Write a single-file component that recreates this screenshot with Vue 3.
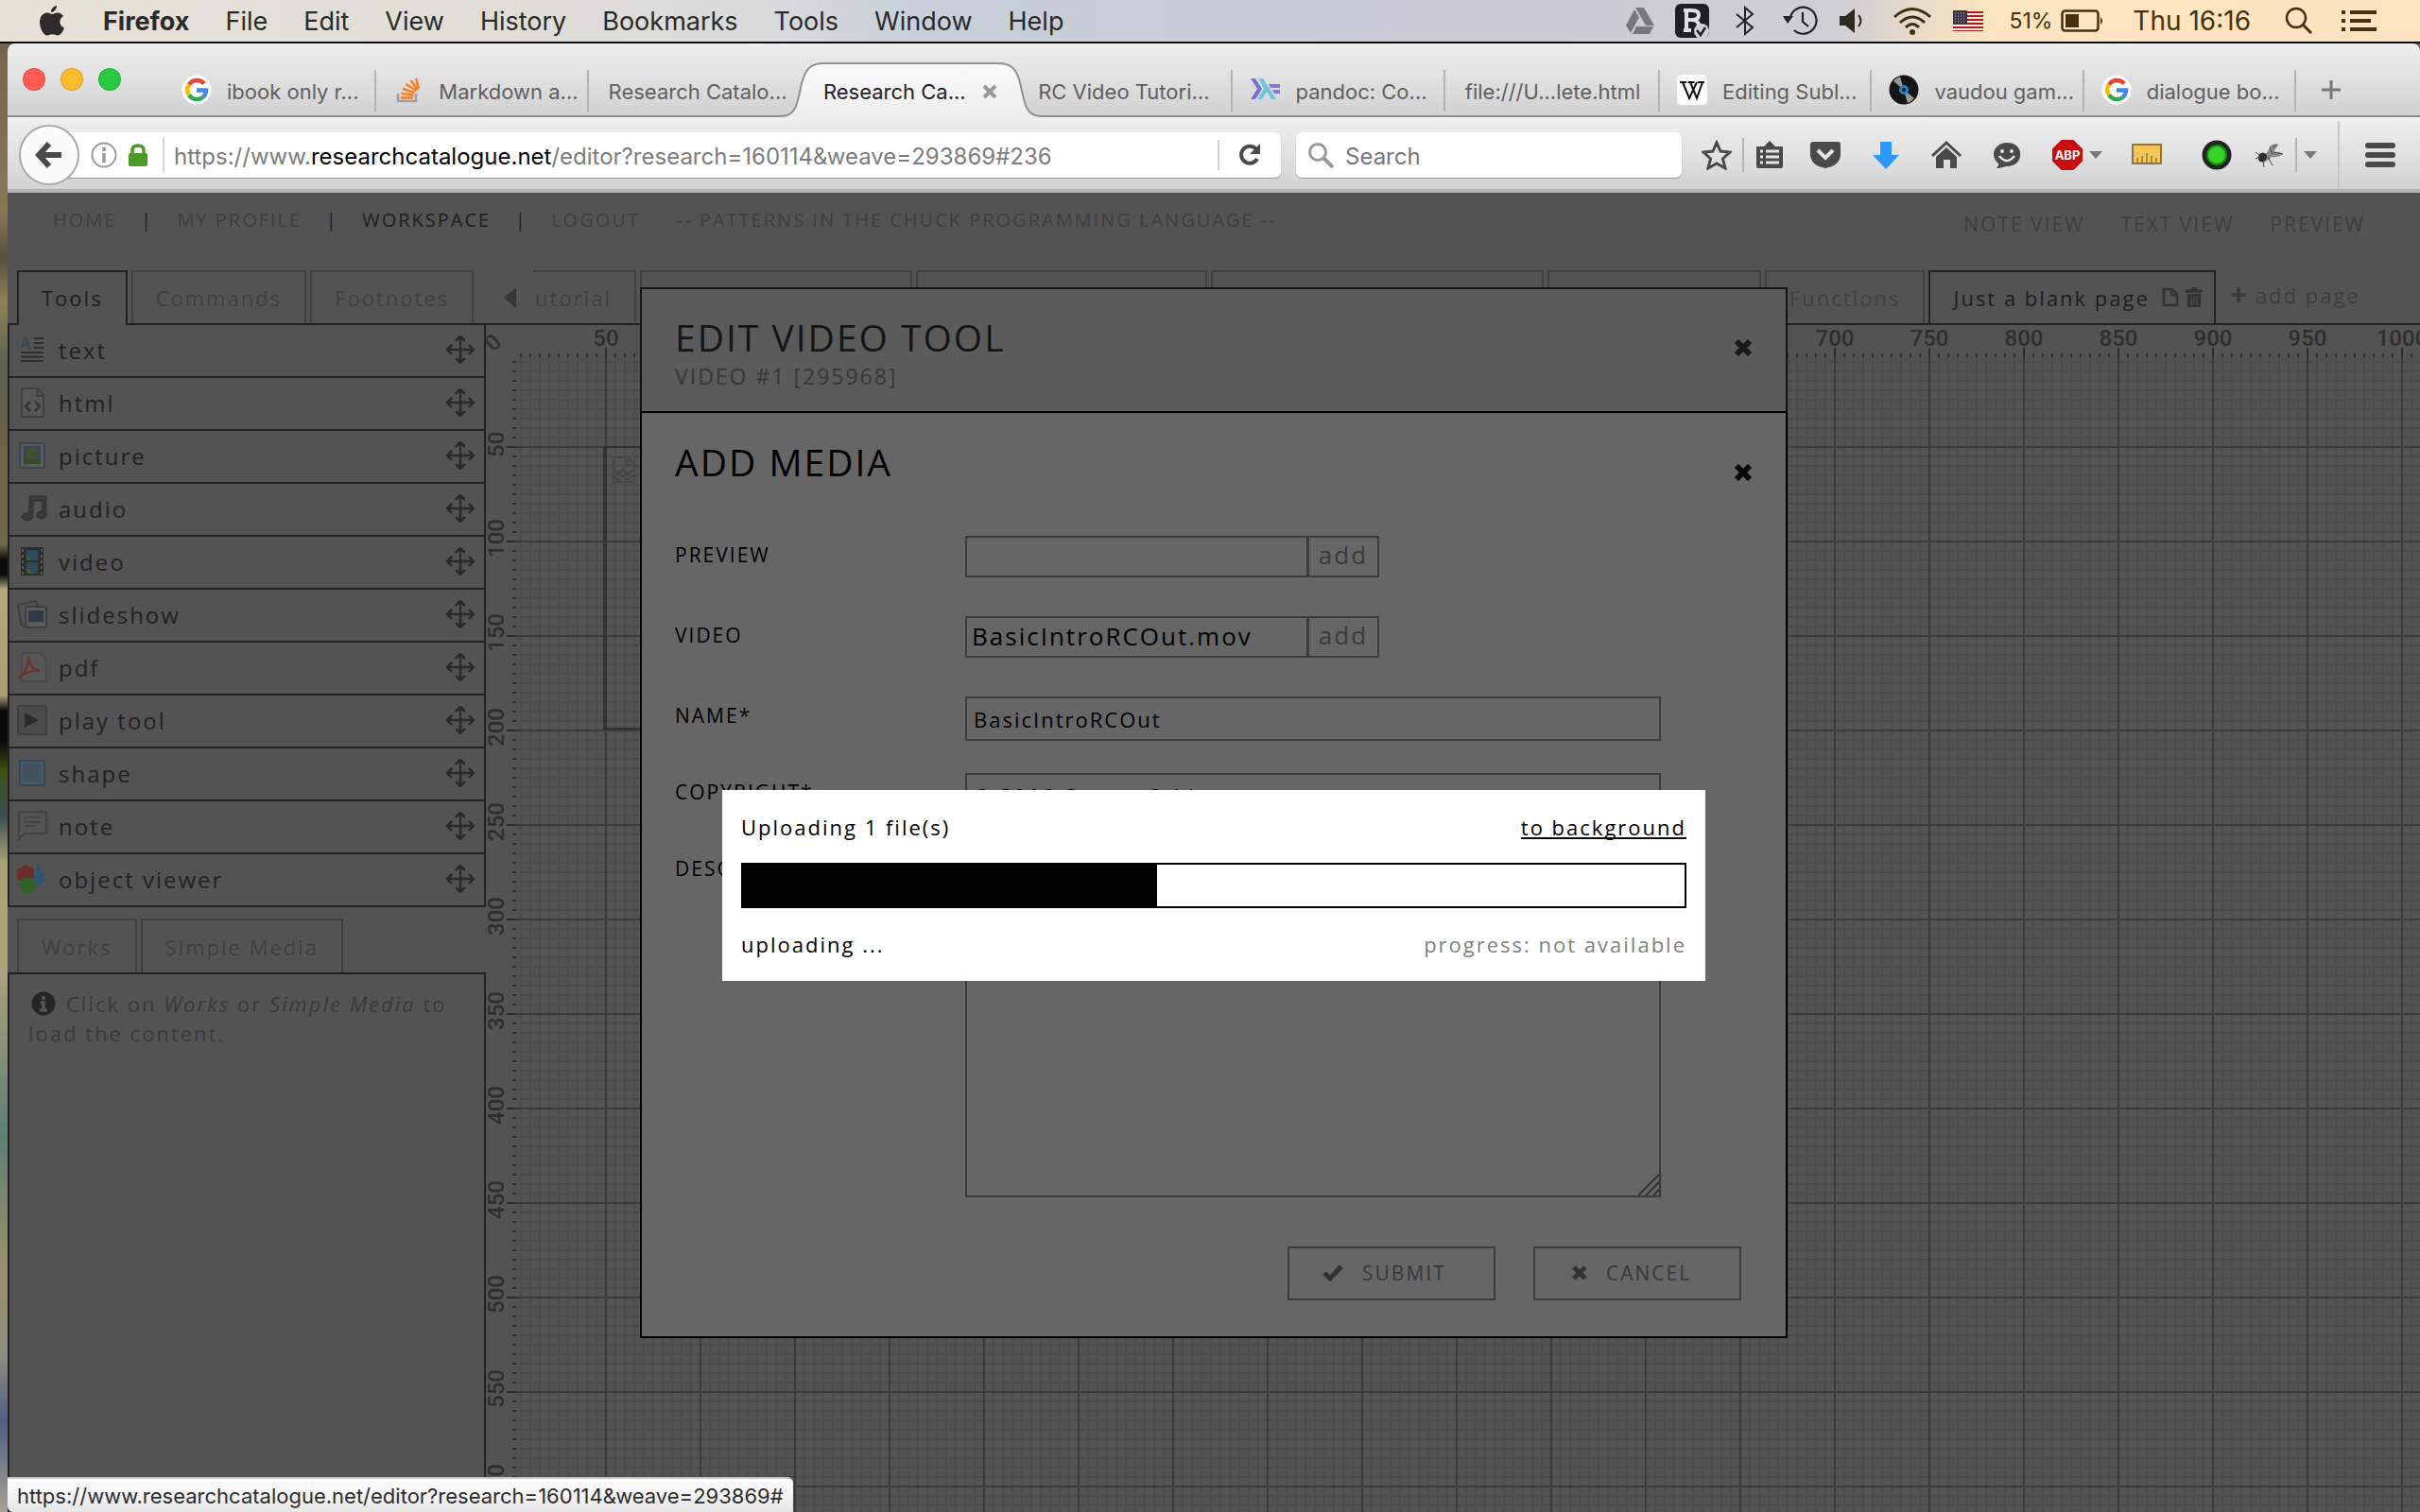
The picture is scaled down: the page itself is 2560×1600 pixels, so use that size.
<script setup>
import { ref } from 'vue'

const menus = ['File', 'Edit', 'View', 'History', 'Bookmarks', 'Tools', 'Window', 'Help']

const browserTabs = [
  { title: 'ibook only r...', icon: 'google' },
  { title: 'Markdown a...', icon: 'stack' },
  { title: 'Research Catalo...', last: true },
  { title: 'Research Ca...', active: true },
  { title: 'RC Video Tutori...' },
  { title: 'pandoc: Co...', icon: 'haskell' },
  { title: 'file:///U...lete.html' },
  { title: 'Editing Subl...', icon: 'wiki' },
  { title: 'vaudou gam...', icon: 'vinyl' },
  { title: 'dialogue bo...', icon: 'google' }
]

const favicons = {
  google:
    '<circle cx="16" cy="16" r="15.500" fill="#fff"/><g fill="none" stroke-width="4.500"><path d="M24 9.500A10 10 0 0 0 8 10.500" stroke="#ea4335"/><path d="M8 10.500a10 10 0 0 0 0 11" stroke="#fbbc05"/><path d="M8 21.500a10 10 0 0 0 14.500 2.500" stroke="#34a853"/><path d="M22.500 24a10 10 0 0 0 3.500-7.500H16" stroke="#4285f4"/></g>',
  stack:
    '<path d="M5 20v8h19v-8" fill="none" stroke="#9aa0a4" stroke-width="2.500"/><g stroke="#f48024" stroke-width="2.600"><path d="M8 24.500h13M8.500 20l13 1.500M10 15l12.500 4M13.500 10l11 7M18.500 6l7.500 10M24 4l3 11"/></g>',
  haskell:
    '<path d="M1 4h5l7 11-7 11H1l7-11z" fill="#7b6fd6"/><path d="M9 4h5l14 22h-5l-5-8-5 8H8l7-11z" fill="#6fc7dc"/><path d="M20 10h12v4H22zM24 16h8v4h-6z" fill="#8577d8"/>',
  wiki:
    '<rect width="32" height="32" rx="5" fill="#fff"/><path d="M3 8h7M11.500 8h7M22 8h7M6 8l7 17 8-17M14 8l7 17 6-17" fill="none" stroke="#111" stroke-width="2"/>',
  vinyl:
    '<circle cx="16" cy="16" r="15.500" fill="#161616"/><path d="M16 16 5 7A14 14 0 0 1 12 2zM16 16l11 9a14 14 0 0 1-7 5z" fill="#999"/><circle cx="16" cy="16" r="5" fill="#1c83c9"/><circle cx="16" cy="16" r="2" fill="#111"/>'
}

const tools = ['text', 'html', 'picture', 'audio', 'video', 'slideshow', 'pdf', 'play tool', 'shape', 'note', 'object viewer']

const toolIcons = {
  text: '<path d="M4 15 9 3l5 12M6 11h6" fill="none" stroke="#3c4856" stroke-width="2.500"/><path d="M18 4h10M18 9h10M18 14h10M4 19h24M4 23.500h24M4 28h24" stroke="#2e2e2e" stroke-width="2"/>',
  html: '<path d="M5 1h17l6 7v23H5zM21 1v8h7" fill="#575757" stroke="#3f3f3f" stroke-width="2"/><path d="m14 15-5 5 5 5M19 15l5 5-5 5" fill="none" stroke="#3a343c" stroke-width="2.500"/>',
  picture: '<rect x="3" y="3" width="26" height="26" rx="2" fill="#5a5a5a" stroke="#3d454e" stroke-width="2"/><path d="M7 6h18v19H7z" fill="#36465a"/><path d="M7 20h18v5H7z" fill="#334a2c"/><circle cx="16" cy="14" r="7" fill="#3e5230"/><path d="M15 18h2v6h-2z" fill="#553a28"/>',
  audio: '<path d="M13 3h18v20a5 4 0 1 1-4-4V8H17v17a6 4 0 1 1-4-4z" fill="#3a3a3a" stroke="#2e2e2e"/>',
  video: '<path d="M4 1h24v30H4z" fill="#2d2d2d"/><path d="M10 4h12v11H10zM10 17h12v12H10z" fill="#2e4a5e"/><path d="m10 9 6 6h-6zM10 23l9 6h-9z" fill="#3d5a34"/><path d="M6 3v27M26 3v27" stroke="#555" stroke-width="2" stroke-dasharray="3 3"/>',
  slideshow: '<path d="M1 6 20 2l2 6M1 6l4 22 6 2" fill="none" stroke="#3a3f42" stroke-width="2"/><rect x="9" y="8" width="22" height="22" rx="2" fill="#5b5b5b" stroke="#3b3f42" stroke-width="2"/><path d="M12 12h16v12H12z" fill="#2f3a49"/>',
  pdf: '<path d="M5 1h19l7 7v23H5z" fill="#575757" stroke="#4a4a4a" stroke-width="2"/><path d="M1 27c7-3 11-12 11-22 1 9 5 14 12 15-8-1-13 1-23 7" fill="none" stroke="#6a3531" stroke-width="2.500"/>',
  'play tool': '<rect x="1" y="1" width="30" height="30" rx="3" fill="#4b4b4b" stroke="#3d3d3d" stroke-width="2"/><path d="m8 8 15 8-15 8z" fill="#2a2a2a"/>',
  shape: '<rect x="3" y="3" width="26" height="26" rx="1" fill="#435262" stroke="#31465a" stroke-width="2"/><rect x="5" y="5" width="22" height="22" fill="none" stroke="#56626e"/>',
  note: '<path d="M2 30V3q0-2 2-2h25q2 0 2 2v19q0 2-2 2H8z" fill="#545454" stroke="#424242" stroke-width="2"/><path d="M7 7h18M7 12h18M7 16h12" stroke="#444" stroke-width="2"/>',
  'object viewer': '<path d="m0 6 9-5 9 4v10l-9 6-9-5z" fill="#6a2f2a"/><path d="m22 0 9 18-8 6-6-6z" fill="#2e5570"/><circle cx="11" cy="23" r="8.500" fill="#2f6225"/>'
}

const rulerX = Array.from({ length: 20 }, (_, i) => (i + 1) * 50)
const rulerY = Array.from({ length: 12 }, (_, i) => (i + 1) * 50)

const videoFile = ref('BasicIntroRCOut.mov')
const previewFile = ref('')
const mediaName = ref('BasicIntroRCOut')
const copyright = ref('© 2016 Casper Schipper')
const description = ref('')
const progress = ref(44)
</script>

<template>
  <div class="desktop">
    <header class="menubar">
      <svg class="apple" viewBox="0 0 26 32"><path d="M18 0c.3 3-2.500 7-6 7-.3-3.500 3-6.700 6-7zM13 9c1.500 0 3-1.500 6-1.500 2.500 0 4.700 1.500 6 3.500-5.500 3.500-4.500 10.500 1 12.500-1.500 4-4 8-7 8-2 0-3-1.200-5.500-1.200S10 31.500 8 31.500c-4 0-8-8-8-14C0 11 4 7.500 8 7.500c2.200 0 3.800 1.500 5 1.500z" fill="#2f2b28"/></svg>
      <strong class="app-name">Firefox</strong>
      <nav class="menus"><span v-for="m in menus" :key="m">{{ m }}</span></nav>
      <div class="status-items">
        <svg width="30" height="28" viewBox="0 0 30 28"><path d="M10 0h9l11 19h-9zM9 2l5 8L5 27 0 19zM11 20h18l-4 8H7z" fill="#77787c"/></svg>
        <svg class="g-s" width="36" height="36" viewBox="0 0 36 36"><rect width="36" height="36" rx="6" fill="#1f2023"/><path d="M12 7v22M9 7h9q7 0 7 5t-7 5h-6M12 17h7q6 1 6 6M9 28h8" fill="none" stroke="#dedfe3" stroke-width="4"/><circle cx="28" cy="29" r="8" fill="#d0d1d6"/><path d="m23 28 4 5 5-8" fill="none" stroke="#222" stroke-width="2.500"/></svg>
        <svg class="g-m" width="20" height="32" viewBox="0 0 20 32"><path d="m1 9 17 14-8 7V2l8 7L1 23" fill="none" stroke="#222326" stroke-width="2"/></svg>
        <svg class="g-l" width="38" height="32" viewBox="0 0 38 32"><path d="M8 12A14 14 0 1 1 12 26M21 7v10l6 5" fill="none" stroke="#222326" stroke-width="2.200"/><path d="M0 11h11l-6 8z" fill="#222326"/></svg>
        <svg class="g-s" width="26" height="26" viewBox="0 0 26 26"><path d="M0 8h6l10-8v26L6 18H0z" fill="#2d2a22"/><path d="M20 7q5 6 0 12" fill="none" stroke="#2d2a22" stroke-width="2"/></svg>
        <svg class="g-l" width="42" height="30" viewBox="0 0 42 30"><g fill="none" stroke="#40300f" stroke-width="3"><path d="M2 11Q21-6 40 11M8 17q13-12 26 0M14 22q7-7 14 0"/></g><circle cx="21" cy="27" r="3" fill="#40300f"/></svg>
        <svg class="g-s" width="32" height="22" viewBox="0 0 32 22"><path fill="#f3e6e0" d="M0 0h32v22H0z"/><path d="M0 2h32M0 6h32M0 10h32M0 14h32M0 18h32M0 22h32" stroke="#b01c18" stroke-width="2"/><path fill="#3c3447" d="M0 0h15v14H0z"/><path d="M2 3h12M2 6h12M2 9h12M2 12h12" stroke="#c9bfc4" stroke-dasharray="1 2"/></svg>
        <span class="percent">51%</span>
        <svg class="battery" width="46" height="24" viewBox="0 0 46 24"><rect x="1.500" y="1.500" width="38" height="21" rx="3" fill="none" stroke="#45310d" stroke-width="2.500"/><path d="M5 5h14v14H5z" fill="#45310d"/><path d="M42 8q4 4 0 8z" fill="#45310d"/></svg>
        <time class="clock">Thu 16:16</time>
        <svg class="g-xl" width="30" height="30" viewBox="0 0 30 30"><circle cx="12" cy="12" r="10" fill="none" stroke="#45310d" stroke-width="2.500"/><path d="m19 19 9 9" stroke="#45310d" stroke-width="3"/></svg>
        <svg class="g-l" width="37" height="22" viewBox="0 0 37 22"><path d="M0 2h4M9 2h28M0 11h4M9 11h22M0 20h4M9 20h28" stroke="#45310d" stroke-width="4"/></svg>
      </div>
    </header>

    <section class="window">
      <div class="tabstrip">
        <div class="lights"><i class="red"></i><i class="amber"></i><i class="green"></i></div>
        <div class="tabs">
          <div v-for="(t, i) in browserTabs" :key="i" class="tab" :class="{ active: t.active, bare: !t.icon, last: t.last || t.active }">
            <svg v-if="t.active" class="tab-shape" viewBox="0 0 274 60" preserveAspectRatio="none">
              <defs><linearGradient id="tabfill" x2="0" y2="1"><stop offset="0" stop-color="#fafafa" /><stop offset="1" stop-color="#ededed" /></linearGradient></defs>
              <path d="M0 60V57C16 57 17 45 22 22 26 6 32 1 46 1H228c14 0 20 5 24 21 5 23 6 35 22 35v3z" fill="url(#tabfill)" />
              <path d="M0 57C16 57 17 45 22 22 26 6 32 1 46 1H228c14 0 20 5 24 21 5 23 6 35 22 35" fill="none" stroke="#919191" stroke-width="2" />
            </svg>
            <svg v-if="t.icon" class="favicon" viewBox="0 0 32 32" v-html="favicons[t.icon]"></svg>
            <span class="tab-title">{{ t.title }}</span>
            <button v-if="t.active" class="tab-close" aria-label="Close tab"><svg width="16" height="16" viewBox="0 0 16 16"><path d="m2 2 12 12M14 2 2 14" stroke="#999" stroke-width="4" /></svg></button>
          </div>
        </div>
        <button class="new-tab" aria-label="New tab"><svg width="22" height="22" viewBox="0 0 22 22"><path d="M11 1v20M1 11h20" stroke="#777" stroke-width="3" /></svg></button>
      </div>

      <div class="toolbar">
        <button class="back" aria-label="Back"><svg width="30" height="30" viewBox="0 0 30 30"><path d="M28 15H5M15 3 4 15l11 12" fill="none" stroke="#4a4a4a" stroke-width="6" /></svg></button>
        <div class="urlbar">
          <svg width="28" height="28" viewBox="0 0 28 28"><circle cx="14" cy="14" r="12.500" fill="none" stroke="#999" stroke-width="2" /><path d="M14 6v4M14 12v10" stroke="#999" stroke-width="3.500" /></svg>
          <svg class="lock" width="20" height="24" viewBox="0 0 20 24"><path d="M4 12V7q0-5 6-5t6 5v5" fill="none" stroke="#4c9a26" stroke-width="3.500" /><rect y="10" width="20" height="14" rx="2" fill="#4c9a26" /></svg>
          <i class="url-sep"></i>
          <div class="url">https://www.<b>researchcatalogue.net</b>/editor?research=160114&amp;weave=293869#236</div>
          <button class="reload" aria-label="Reload"><svg width="24" height="24" viewBox="0 0 24 24"><path d="M19 6a9 9 0 1 0 1 10" fill="none" stroke="#4a4a4a" stroke-width="4" /><path d="M23 0v11H12z" fill="#4a4a4a" /></svg></button>
        </div>
        <div class="search">
          <svg width="28" height="28" viewBox="0 0 28 28"><circle cx="11" cy="11" r="8.500" fill="none" stroke="#999" stroke-width="3" /><path d="m17 17 10 10" stroke="#999" stroke-width="4" /></svg>
          <input type="text" placeholder="Search" aria-label="Search" />
        </div>
        <div class="tb-icons">
          <button class="tb star" aria-label="Bookmark"><svg viewBox="0 0 32 32"><path d="m16 3 4 9 10 1-7.500 7L25 30l-9-5-9 5 2.500-10L2 13l10-1z" fill="none" stroke="#4a4a4a" stroke-width="3" /></svg></button>
          <i class="tb-sep"></i>
          <button class="tb clip" aria-label="Bookmarks list"><svg viewBox="0 0 28 32"><path d="M0 7h8l6-6 6 6h8v21q0 2-2 2H2q-2 0-2-2z" fill="#4a4a4a" /><path d="M4 12h3M10 12h14M4 18h3M10 18h14M4 24h3M10 24h14" stroke="#e4e4e4" stroke-width="3" /></svg></button>
          <button class="tb" aria-label="Pocket"><svg viewBox="0 0 32 32"><path d="M3 2h26q3 0 3 3v10q0 12-16 15Q0 27 0 15V5q0-3 3-3z" fill="#4a4a4a" /><path d="m8 11 8 8 8-8" fill="none" stroke="#e4e4e4" stroke-width="4" /></svg></button>
          <button class="tb" aria-label="Downloads"><svg viewBox="0 0 32 32"><path d="M10 2h12v14h8L16 31 2 16h8z" fill="#2d98fb" /></svg></button>
          <button class="tb" aria-label="Home"><svg viewBox="0 0 32 32"><path d="M1 17 16 3l15 14" fill="none" stroke="#4a4a4a" stroke-width="3" /><path d="M5 18 16 8l11 10v12h-7v-9h-7v9H5z" fill="#4a4a4a" /></svg></button>
          <button class="tb" aria-label="Chat"><svg viewBox="0 0 32 32"><path d="M16 3c20 0 18 26 0 25-3 0-5 2-11 2q3-3 2-5C-3 17 3 3 16 3z" fill="#4a4a4a" /><circle cx="11" cy="12" r="2" fill="#e4e4e4" /><circle cx="21" cy="12" r="2" fill="#e4e4e4" /><path d="M8 17q8 10 16 0" fill="none" stroke="#e4e4e4" stroke-width="2.500" /></svg></button>
          <button class="tb abp" aria-label="Adblock Plus"><span>ABP</span></button>
          <i class="caret"></i>
          <button class="tb ruler-btn" aria-label="Measure"><svg viewBox="0 0 32 32"><rect x="1" y="5" width="30" height="20" fill="#f4c65a" stroke="#8d743e" stroke-width="2" /><path d="M6 24v-5M11 24v-7M16 24V14M21 24v-7M26 24v-5" stroke="#9c7327" stroke-width="1.500" /></svg></button>
          <button class="tb light-btn" aria-label="Status"><svg viewBox="0 0 32 32"><circle cx="16" cy="16" r="15.500" fill="#1e2620" /><circle cx="16" cy="16" r="11" fill="#168a12" /><circle cx="16" cy="16" r="9" fill="#35d425" /></svg></button>
          <button class="tb fly" aria-label="Firebug"><svg viewBox="0 0 32 32"><path d="M3 18q4-5 8-3 4-2 5-8 5-4 9-2l-5 8q7-1 10 2-5 4-12 3-4 5-10 6z" fill="#8a8a8a" /><path d="M5 15q4-3 7 0t-2 8q-5 1-6-2z" fill="#2d2d2d" /><path d="m1 13 5 4M9 22l1 7M14 18l5 9M16 8l3 7M20 13l10 2M19 8l5-3M1 20l5-2" fill="none" stroke="#444" stroke-width="1" /></svg></button>
          <i class="tb-sep fly-sep"></i>
          <i class="caret fly-caret"></i>
          <button class="hamburger" aria-label="Menu"><svg width="32" height="28" viewBox="0 0 32 28"><path d="M3 4h26M3 14h26M3 24h26" stroke="#4a4a4a" stroke-width="6" stroke-linecap="round" /></svg></button>
        </div>
      </div>

      <main class="page">
        <nav class="site-nav">
          <a href="#">HOME</a><i>|</i><a href="#">MY PROFILE</a><i>|</i><a href="#" class="on">WORKSPACE</a><i>|</i><a href="#">LOGOUT</a>
          <span class="project">-- PATTERNS IN THE CHUCK PROGRAMMING LANGUAGE --</span>
          <div class="views"><a href="#">NOTE VIEW</a><a href="#">TEXT VIEW</a><a href="#">PREVIEW</a></div>
        </nav>

        <div class="workspace">
          <aside class="sidebar">
            <div class="side-tabs"><button class="rc-tab on">Tools</button><button class="rc-tab">Commands</button><button class="rc-tab">Footnotes</button></div>
            <ul class="tool-list">
              <li v-for="t in tools" :key="t">
                <svg class="tool-icon" viewBox="0 0 32 32" v-html="toolIcons[t]"></svg>
                <span>{{ t }}</span>
                <svg class="move" viewBox="0 0 30 30"><path d="M15 1v28M1 15h28M10 6l5-5 5 5M10 24l5 5 5-5M6 10l-5 5 5 5M24 10l5 5-5 5" fill="none" stroke="#2a2a2a" stroke-width="2.500" /></svg>
              </li>
            </ul>
            <div class="side-tabs media-tabs"><button class="rc-tab">Works</button><button class="rc-tab">Simple Media</button></div>
            <div class="media-box">
              <p><svg class="info" viewBox="0 0 26 26"><circle cx="13" cy="13" r="12.500" fill="#262626" /><path d="M13 5v4M10 12h3v8M9 20h8" fill="none" stroke="#555" stroke-width="3.500" /></svg>Click on <em>Works</em> or <em>Simple Media</em> to load the content.</p>
            </div>
          </aside>

          <section class="board">
            <div class="page-tabs">
              <button class="scroll-left" aria-label="Scroll tabs"></button>
              <button class="rc-tab cut">utorial</button>
              <button class="rc-tab w1" aria-label="Page"></button>
              <button class="rc-tab w2" aria-label="Page"></button>
              <button class="rc-tab w3" aria-label="Page"></button>
              <button class="rc-tab w4" aria-label="Page"></button>
              <button class="rc-tab">Functions</button>
              <button class="rc-tab on current"><span>Just a blank page</span>
                <svg width="18" height="22" viewBox="0 0 18 22"><path d="M2 2h9l5 5v12H2zM10 2v6h6" fill="none" stroke="#333" stroke-width="2.500" /></svg>
                <svg width="18" height="22" viewBox="0 0 18 22"><path d="M0 4h18M6 1h6" stroke="#333" stroke-width="3" /><path d="M2 7h14v14H2z" fill="#333" /><path d="M6 9v10M9 9v10M12 9v10" stroke="#535353" /></svg>
              </button>
              <button class="add-page"><svg width="16" height="16" viewBox="0 0 16 16"><path d="M8 0v16M0 8h16" stroke="#3d3d3d" stroke-width="4" /></svg>add page</button>
            </div>
            <div class="canvas">
              <div class="origin">0</div>
              <div class="ruler-x"><span v-for="n in rulerX" :key="n">{{ n }}</span></div>
              <div class="ruler-y"><span v-for="n in rulerY" :key="n">{{ n }}</span></div>
              <div class="grid">
                <div class="placed"><svg width="24" height="28" viewBox="0 0 24 28"><path d="M1 1h15l7 7v19H1zM15 1v8h8M1 14l5 5 5-5 5 5 6-5M1 20l5 5 5-5 5 5 6-5" fill="none" stroke="#464646" stroke-width="2" /></svg></div>
              </div>
            </div>
          </section>
        </div>

        <div class="overlay">
          <form class="modal" @submit.prevent>
            <header class="modal-head">
              <div><h1>EDIT VIDEO TOOL</h1><p>VIDEO #1 [295968]</p></div>
              <button type="button" class="close" aria-label="Close"><svg width="20" height="20" viewBox="0 0 20 20"><path d="m3 3 14 14M17 3 3 17" stroke="#1a1a1a" stroke-width="6" /></svg></button>
            </header>
            <div class="modal-body">
              <div class="sub-head">
                <h1>ADD MEDIA</h1>
                <button type="button" class="close" aria-label="Close"><svg width="20" height="20" viewBox="0 0 20 20"><path d="m3 3 14 14M17 3 3 17" stroke="#0a0a0a" stroke-width="6" /></svg></button>
              </div>
              <div class="row file"><label for="preview">PREVIEW</label><input id="preview" v-model="previewFile" type="text" /><button type="button">add</button></div>
              <div class="row file"><label for="video">VIDEO</label><input id="video" v-model="videoFile" type="text" /><button type="button">add</button></div>
              <div class="row"><label for="name">NAME*</label><input id="name" v-model="mediaName" type="text" /></div>
              <div class="row"><label for="copyright">COPYRIGHT*</label><input id="copyright" v-model="copyright" type="text" /></div>
              <div class="row"><label for="description">DESCRIPTION</label>
                <div class="area"><textarea id="description" v-model="description"></textarea><svg class="grip" width="22" height="22" viewBox="0 0 22 22"><path d="M0 22 22 0M8 22 22 8M16 22l6-6" stroke="#333" stroke-width="2" /></svg></div>
              </div>
              <div class="actions">
                <button type="submit"><svg width="22" height="18" viewBox="0 0 22 18"><path d="m2 9 6 6L20 2" fill="none" stroke="#333" stroke-width="5" /></svg>SUBMIT</button>
                <button type="button" class="cancel"><svg width="16" height="16" viewBox="0 0 16 16"><path d="m2 2 12 12M14 2 2 14" stroke="#333" stroke-width="5" /></svg>CANCEL</button>
              </div>
            </div>
          </form>
        </div>

        <div class="overlay">
          <section class="upload">
            <div class="upload-line"><span>Uploading 1 file(s)</span><a href="#">to background</a></div>
            <div class="bar" role="progressbar" aria-label="Upload progress"><div class="fill" :style="{ width: progress + '%' }"></div></div>
            <div class="upload-line"><span>uploading ...</span><span class="muted">progress: not available</span></div>
          </section>
        </div>

        <div class="link-status">https://www.researchcatalogue.net/editor?research=160114&amp;weave=293869#</div>
      </main>
    </section>
  </div>
</template>

<style>
body { margin: 0; }
</style>

<style scoped>
* { box-sizing: border-box; }
button, input, textarea { font: inherit; letter-spacing: inherit; color: inherit; background: none; border: 0; padding: 0; margin: 0; border-radius: 0; }
svg { display: block; flex: none; }
h1, p, ul { margin: 0; padding: 0; font-weight: 400; }
i { font-style: normal; }
a { color: inherit; text-decoration: none; }

.desktop {
  height: 100vh; display: flex; flex-direction: column; overflow: hidden;
  font-family: Inter, "Liberation Sans", sans-serif;
  background: linear-gradient(#6d604c 0, #8a7752 14%, #55503d 17%, #8f8257 20%, #5a6350 24%, #6d6247 29%, #6f6a4a 36%, #0b0b0b 37%, #0b0b0b 38%, #b5aa7e 39%, #a89c74 46%, #0a0a08 47%, #0a0a08 49%, #3c5210 51%, #3b4f54 54%, #a9a074 57%, #aca27a 64%, #5d8072 75%, #9a9068 84%, #8a8a80 90%, #4d5f86 94%, #a7a18e 100%);
}
.menubar {
  height: 46px; flex: none; display: flex; align-items: center; padding: 0 46px 0 42px;
  font-size: 27px; color: #2a2a2a; border-bottom: 2px solid #0c0c12;
  background: linear-gradient(90deg, #e8e1da 0, #dfdcd6 22%, #d8dadb 32%, #c8cfda 38%, #c9cbd5 62%, #cfced4 76%, #fbe5bf 82%, #fde3c0 100%);
}
.apple { width: 26px; height: 32px; }
.app-name { margin-left: 41px; font-weight: 700; }
.menus { display: flex; gap: 38px; margin-left: 38px; }
.status-items { margin-left: auto; display: flex; align-items: center; color: #45310d; }
.g-s { margin-left: 22px; }
.g-m { margin-left: 28px; }
.g-l { margin-left: 30px; }
.g-xl { margin-left: 36px; }
.percent { font-size: 23px; margin-left: 27px; }
.battery { margin-left: 9px; }
.clock { margin-left: 30px; font-size: 28px; }

.window { flex: 1; min-height: 0; margin-left: 8px; display: flex; flex-direction: column; border-radius: 8px 8px 0 0; overflow: hidden; }
.tabstrip { height: 78px; flex: none; display: flex; border-bottom: 2px solid #8d8d8d; background: linear-gradient(#eee, #e0e0e0 50%, #d2d2d2); font-size: 22px; color: #5f5f5f; }
.lights { width: 166px; flex: none; display: flex; gap: 16px; padding: 26px 0 0 16px; }
.lights i { width: 24px; height: 24px; border-radius: 50%; border: 1px solid #0002; }
.red { background: #ff5b52; }
.amber { background: #fdbc2e; }
.green { background: #28c940; }
.tabs { flex: 1; min-width: 0; display: flex; }
.tab { flex: 1 1 0; min-width: 0; position: relative; display: flex; align-items: center; padding: 26px 0 0 18px; white-space: nowrap; }
.tab::after { content: ""; position: absolute; right: 0; top: 28px; width: 2px; height: 44px; background: #b3b3b3; }
.tab.last::after { display: none; }
.tab.bare { padding-left: 21px; }
.favicon { width: 32px; height: 32px; margin: -4px 16px 0 0; }
.tab-title { position: relative; line-height: 30px; }
.tab.active { color: #222; z-index: 2; }
.tab-shape { position: absolute; left: -24px; top: 20px; width: calc(100% + 48px); height: 60px; }
.tab-close { position: relative; margin-left: auto; margin-right: 22px; }
.new-tab { width: 131px; padding: 22px 0 0 26px; }

.toolbar { height: 80px; flex: none; display: flex; align-items: center; position: relative; border-bottom: 4px solid #b2b2b2; background: linear-gradient(#f0f0f0, #e4e4e4 40%, #d3d3d3); padding: 4px 0 0 12px; font-size: 24px; }
.back { width: 64px; height: 64px; flex: none; border: 2px solid #a9a9a9; border-radius: 50%; background: #fbfbfb; display: grid; place-items: center; z-index: 1; }
.urlbar { flex: 1; height: 48px; margin-left: -12px; padding-left: 24px; display: flex; align-items: center; background: #fff; border-radius: 0 6px 6px 0; box-shadow: 0 1px 1px #999; }
.lock { margin-left: 12px; }
.url-sep { width: 2px; height: 36px; background: #d2d2d2; margin-left: 16px; }
.url { margin-left: 10px; color: #7c7c7c; white-space: nowrap; flex: 1; padding-top: 2px; }
.url b { font-weight: 400; color: #000; }
.reload { width: 67px; height: 32px; border-left: 2px solid #d2d2d2; padding-left: 20px; }
.search { width: 408px; height: 48px; margin-left: 16px; padding-left: 12px; display: flex; align-items: center; gap: 12px; background: #fff; border-radius: 6px; box-shadow: 0 1px 1px #999; }
.search input { flex: 1; min-width: 0; outline: 0; padding-top: 2px; }
.search input::placeholder { color: #777; opacity: 1; }
.tb-icons { display: flex; align-items: center; height: 100%; flex: none; }
.tb { width: 64px; height: 32px; display: grid; place-items: center; }
.tb svg { width: 32px; height: 32px; }
.tb.star { padding-left: 9px; }
.tb-sep { width: 2px; height: 36px; background: #b5b5b5; }
.tb.clip { width: 54px; }
.tb.clip svg { width: 28px; }
.tb.abp { width: 55px; padding-left: 9px; }
.abp span { width: 32px; height: 32px; background: #c70d0d; color: #fff; font-size: 13px; line-height: 32px; font-weight: 700; text-align: center; clip-path: polygon(30% 0, 70% 0, 100% 30%, 100% 70%, 70% 100%, 30% 100%, 0 70%, 0 30%); }
.caret { border: 7px solid transparent; border-top: 8px solid #777; border-bottom: 0; }
.ruler-btn { margin-left: 15px; }
.light-btn { margin-left: 10px; }
.tb.fly { width: 48px; }
.fly-sep { margin-left: 3px; }
.fly-caret { margin-left: 7px; }
.hamburger { margin-left: 22px; width: 87px; height: 100%; border-left: 2px solid #c6c6c6; display: grid; place-items: center; }

.page { flex: 1; min-height: 0; position: relative; overflow: hidden; display: flex; flex-direction: column; background: #535353; color: #222; font-family: "Open Sans", "Noto Sans", sans-serif; font-size: 22px; letter-spacing: 2px; }
.site-nav { height: 82px; flex: none; display: flex; padding: 14px 58px 0 48px; font-size: 20px; line-height: 30px; color: #3e3e3e; }
.site-nav i { color: #222; width: 64px; text-align: center; }
.site-nav .on { color: #1e1e1e; }
.project { margin-left: 39px; }
.views { margin-left: auto; display: flex; gap: 38px; padding-top: 4px; font-size: 21px; }

.workspace { flex: 1; min-height: 0; display: grid; grid-template-columns: 506px minmax(0, 1fr); }
.sidebar { display: flex; flex-direction: column; min-height: 0; }
.side-tabs, .page-tabs { height: 58px; flex: none; display: flex; gap: 4px; border-bottom: 2px solid #222; }
.side-tabs { padding-left: 10px; }
.rc-tab { height: 56px; flex: none; border: 2px solid #404040; border-bottom: 0; padding: 0 24px; color: #404040; white-space: nowrap; }
.rc-tab.on { height: 58px; border-color: #222; color: #1e1e1e; background: #535353; padding-bottom: 2px; }
.tool-list { list-style: none; border: 2px solid #222; border-top: 0; border-bottom: 0; }
.tool-list li { height: 56px; display: flex; align-items: center; border-bottom: 2px solid #222; padding: 0 10px 2px 8px; font-size: 24px; }
.tool-icon { width: 32px; height: 32px; margin-right: 12px; }
.move { width: 30px; height: 30px; margin-left: auto; }
.media-tabs { margin-top: 12px; height: 59px; }
.media-tabs .rc-tab { height: 57px; }
.media-box { flex: 1; border: 2px solid #222; border-top: 0; border-bottom: 0; padding: 16px 20px; line-height: 31px; color: #3a3a3a; }
.info { width: 26px; height: 26px; display: inline-block; vertical-align: -4px; margin: 0 11px 0 3px; }

.board { display: flex; flex-direction: column; min-width: 0; min-height: 0; }
.page-tabs { overflow: hidden; }
.scroll-left { width: 13px; height: 22px; margin: 18px 14px 0 19px; flex: none; background: #363636; clip-path: polygon(100% 0, 100% 100%, 0 50%); }
.rc-tab.cut { border-left: 0; padding-left: 2px; width: 109px; }
.w1 { width: 288px; }
.w2 { width: 308px; }
.w3 { width: 352px; }
.w4 { width: 226px; }
.current { display: flex; align-items: center; gap: 7px; padding: 0 12px 2px 24px; }
.current span { margin-right: 6px; }
.add-page { display: flex; align-items: center; gap: 10px; color: #3e3e3e; padding: 0 0 4px 12px; white-space: nowrap; }

.canvas { flex: 1; min-height: 0; display: grid; grid-template: 34px minmax(0, 1fr) / 32px minmax(0, 1fr); font: 500 24px/28px Roboto, sans-serif; letter-spacing: 0; color: #2f2f2f; }
.origin { transform: rotate(-45deg); padding: 2px 0 0 2px; line-height: 20px; }
.ruler-x { display: flex; overflow: hidden; padding-left: 45px; background: linear-gradient(90deg, #2c2c2c 2px, transparent 2px) 94px 100% / 100px 10px repeat-x, linear-gradient(90deg, #2c2c2c 2px, transparent 2px) 4px 100% / 10px 4px repeat-x; }
.ruler-x span { width: 100px; flex: none; text-align: center; }
.ruler-y { padding-top: 42px; background: linear-gradient(#2c2c2c 2px, transparent 2px) 100% 94px / 10px 100px repeat-y, linear-gradient(#2c2c2c 2px, transparent 2px) 100% 4px / 4px 10px repeat-y; }
.ruler-y span { height: 100px; width: 28px; margin-left: -3px; display: block; text-align: center; writing-mode: vertical-rl; transform: rotate(180deg); }
.grid {
  position: relative; overflow: hidden;
  background:
    linear-gradient(90deg, #3a3a3a 2px, transparent 2px) 94px 0 / 100px 100px,
    linear-gradient(#3a3a3a 2px, transparent 2px) 0 94px / 100px 100px,
    linear-gradient(90deg, #4b4b4b 2px, transparent 2px) 4px 0 / 10px 10px,
    linear-gradient(#4b4b4b 2px, transparent 2px) 0 4px / 10px 10px;
}
.placed { position: absolute; left: 92px; top: 94px; width: 400px; height: 300px; border: 2px solid #333; border-left-width: 4px; padding: 9px 6px; }

.overlay { position: absolute; inset: 0; display: flex; justify-content: center; align-items: flex-start; pointer-events: none; }
.modal { width: 1214px; max-width: 96%; margin-top: 100px; color: #000; }
.modal-head { display: flex; justify-content: space-between; padding: 27px 35px 20px 35px; border: 2px solid #151515; border-bottom: 2px solid #000; background: #5b5b5b; color: #151515; }
h1 { font-size: 39px; line-height: 48px; }
.modal-head p { font-size: 23px; line-height: 34px; color: #383838; }
.close { align-self: flex-start; margin-top: 25px; }
.modal-body { border: 2px solid #000; border-top: 0; background: #666; padding: 28px 47px 38px 35px; }
.sub-head { display: flex; justify-content: space-between; margin: 0 -12px 54px 0; }
.row { display: flex; align-items: flex-start; margin-bottom: 34px; }
.row label { width: 307px; flex: none; padding-top: 5px; font-size: 21px; line-height: 30px; }
.row input { height: 47px; width: 736px; border: 2px solid #3b3b3b; padding: 0 7px; }
.row.file { margin-bottom: 41px; font-size: 26px; }
.row.file input { width: 363px; height: 44px; padding: 0 5px 2px; }
.row.file button { width: 76px; height: 44px; border: 2px solid #3b3b3b; margin-left: -1px; color: #3b3b3b; line-height: 36px; padding-bottom: 4px; }
.area { position: relative; width: 736px; }
textarea { display: block; width: 100%; height: 368px; border: 2px solid #3b3b3b; resize: none; }
.grip { position: absolute; right: 2px; bottom: 2px; }
.actions { display: flex; justify-content: flex-end; gap: 40px; padding-top: 18px; font-size: 21px; color: #383838; }
.actions button { width: 220px; height: 57px; border: 2px solid #3b3b3b; padding: 0 0 2px 35px; display: flex; align-items: center; gap: 20px; }
.actions .cancel { padding-left: 39px; }

.upload { width: 1040px; max-width: 90%; margin-top: 632px; background: #fff; color: #000; padding: 23px 20px; }
.upload-line { display: flex; justify-content: space-between; line-height: 32px; }
.upload-line a { border-bottom: 2px solid #000; line-height: 24px; height: 29px; padding-top: 4px; }
.muted { color: #808080; }
.bar { height: 48px; border: 2px solid #000; margin: 22px 0; }
.fill { height: 100%; background: #000; }
.link-status { position: absolute; left: 0; bottom: 0; padding: 0 10px; height: 37px; line-height: 36px; font-family: Inter, sans-serif; font-size: 22px; letter-spacing: 0; color: #2c2c2c; border-top: 2px solid #c4c4c4; border-radius: 0 6px 0 6px; background: linear-gradient(#fff, #e6e6e6); }
</style>
